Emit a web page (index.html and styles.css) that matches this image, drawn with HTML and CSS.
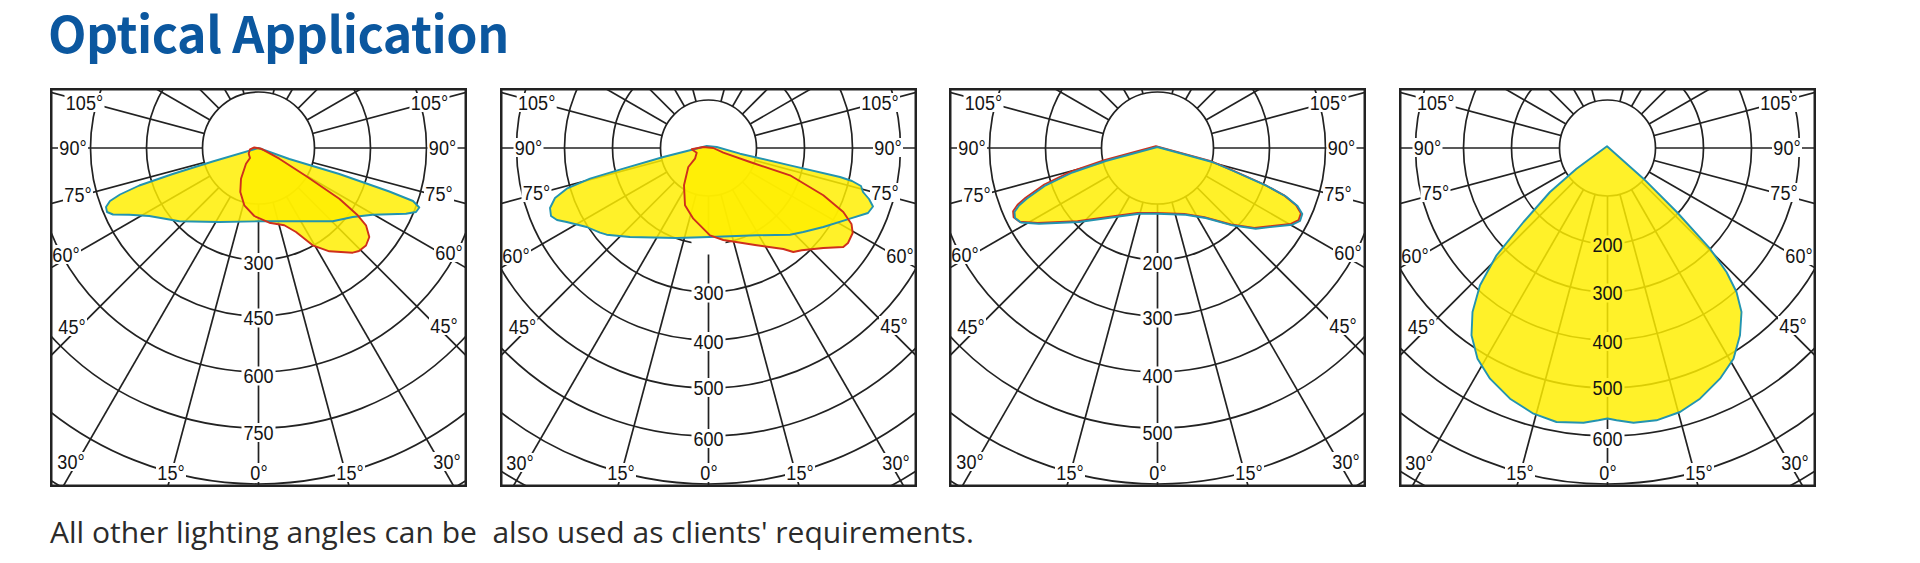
FILE: index.html
```html
<!DOCTYPE html>
<html lang="en">
<head>
<meta charset="utf-8">
<title>Optical Application</title>
<link rel="stylesheet" href="styles.css">
</head>
<body>
<main class="page">
  <h1 class="title">Optical Application</h1>

  <div class="charts">
    <!-- Chart 1 -->
    <figure class="chart">
      <svg class="polar" viewBox="0 0 417 399" width="417" height="399">
        <defs>
          <g id="gridA" class="grid">
            <line class="spoke" x1="208.5" y1="60" x2="208.5" y2="900"/>
            <line class="spoke" x1="208.5" y1="60" x2="208.5" y2="900" transform="rotate(15 208.5 60)"/>
            <line class="spoke" x1="208.5" y1="60" x2="208.5" y2="900" transform="rotate(30 208.5 60)"/>
            <line class="spoke" x1="208.5" y1="60" x2="208.5" y2="900" transform="rotate(45 208.5 60)"/>
            <line class="spoke" x1="208.5" y1="60" x2="208.5" y2="900" transform="rotate(60 208.5 60)"/>
            <line class="spoke" x1="208.5" y1="60" x2="208.5" y2="900" transform="rotate(75 208.5 60)"/>
            <line class="spoke" x1="208.5" y1="60" x2="208.5" y2="900" transform="rotate(90 208.5 60)"/>
            <line class="spoke" x1="208.5" y1="60" x2="208.5" y2="900" transform="rotate(105 208.5 60)"/>
            <line class="spoke" x1="208.5" y1="60" x2="208.5" y2="900" transform="rotate(120 208.5 60)"/>
            <line class="spoke" x1="208.5" y1="60" x2="208.5" y2="900" transform="rotate(135 208.5 60)"/>
            <line class="spoke" x1="208.5" y1="60" x2="208.5" y2="900" transform="rotate(150 208.5 60)"/>
            <line class="spoke" x1="208.5" y1="60" x2="208.5" y2="900" transform="rotate(165 208.5 60)"/>
            <line class="spoke" x1="208.5" y1="60" x2="208.5" y2="900" transform="rotate(-15 208.5 60)"/>
            <line class="spoke" x1="208.5" y1="60" x2="208.5" y2="900" transform="rotate(-30 208.5 60)"/>
            <line class="spoke" x1="208.5" y1="60" x2="208.5" y2="900" transform="rotate(-45 208.5 60)"/>
            <line class="spoke" x1="208.5" y1="60" x2="208.5" y2="900" transform="rotate(-60 208.5 60)"/>
            <line class="spoke" x1="208.5" y1="60" x2="208.5" y2="900" transform="rotate(-75 208.5 60)"/>
            <line class="spoke" x1="208.5" y1="60" x2="208.5" y2="900" transform="rotate(-90 208.5 60)"/>
            <line class="spoke" x1="208.5" y1="60" x2="208.5" y2="900" transform="rotate(-105 208.5 60)"/>
            <line class="spoke" x1="208.5" y1="60" x2="208.5" y2="900" transform="rotate(-120 208.5 60)"/>
            <line class="spoke" x1="208.5" y1="60" x2="208.5" y2="900" transform="rotate(-135 208.5 60)"/>
            <line class="spoke" x1="208.5" y1="60" x2="208.5" y2="900" transform="rotate(-150 208.5 60)"/>
            <line class="spoke" x1="208.5" y1="60" x2="208.5" y2="900" transform="rotate(-165 208.5 60)"/>
            <circle class="ring" cx="208.5" cy="60" r="112"/>
            <circle class="ring" cx="208.5" cy="60" r="168"/>
            <circle class="ring" cx="208.5" cy="60" r="224"/>
            <circle class="ring" cx="208.5" cy="60" r="280"/>
            <circle class="ring" cx="208.5" cy="60" r="336"/>
            <circle class="ring" cx="208.5" cy="60" r="392"/>
            <circle class="hub" cx="208.5" cy="60" r="56"/>
          </g>
          <g id="gridB" class="grid">
            <line class="spoke" x1="208.5" y1="60" x2="208.5" y2="900"/>
            <line class="spoke" x1="208.5" y1="60" x2="208.5" y2="900" transform="rotate(15 208.5 60)"/>
            <line class="spoke" x1="208.5" y1="60" x2="208.5" y2="900" transform="rotate(30 208.5 60)"/>
            <line class="spoke" x1="208.5" y1="60" x2="208.5" y2="900" transform="rotate(45 208.5 60)"/>
            <line class="spoke" x1="208.5" y1="60" x2="208.5" y2="900" transform="rotate(60 208.5 60)"/>
            <line class="spoke" x1="208.5" y1="60" x2="208.5" y2="900" transform="rotate(75 208.5 60)"/>
            <line class="spoke" x1="208.5" y1="60" x2="208.5" y2="900" transform="rotate(90 208.5 60)"/>
            <line class="spoke" x1="208.5" y1="60" x2="208.5" y2="900" transform="rotate(105 208.5 60)"/>
            <line class="spoke" x1="208.5" y1="60" x2="208.5" y2="900" transform="rotate(120 208.5 60)"/>
            <line class="spoke" x1="208.5" y1="60" x2="208.5" y2="900" transform="rotate(135 208.5 60)"/>
            <line class="spoke" x1="208.5" y1="60" x2="208.5" y2="900" transform="rotate(150 208.5 60)"/>
            <line class="spoke" x1="208.5" y1="60" x2="208.5" y2="900" transform="rotate(165 208.5 60)"/>
            <line class="spoke" x1="208.5" y1="60" x2="208.5" y2="900" transform="rotate(-15 208.5 60)"/>
            <line class="spoke" x1="208.5" y1="60" x2="208.5" y2="900" transform="rotate(-30 208.5 60)"/>
            <line class="spoke" x1="208.5" y1="60" x2="208.5" y2="900" transform="rotate(-45 208.5 60)"/>
            <line class="spoke" x1="208.5" y1="60" x2="208.5" y2="900" transform="rotate(-60 208.5 60)"/>
            <line class="spoke" x1="208.5" y1="60" x2="208.5" y2="900" transform="rotate(-75 208.5 60)"/>
            <line class="spoke" x1="208.5" y1="60" x2="208.5" y2="900" transform="rotate(-90 208.5 60)"/>
            <line class="spoke" x1="208.5" y1="60" x2="208.5" y2="900" transform="rotate(-105 208.5 60)"/>
            <line class="spoke" x1="208.5" y1="60" x2="208.5" y2="900" transform="rotate(-120 208.5 60)"/>
            <line class="spoke" x1="208.5" y1="60" x2="208.5" y2="900" transform="rotate(-135 208.5 60)"/>
            <line class="spoke" x1="208.5" y1="60" x2="208.5" y2="900" transform="rotate(-150 208.5 60)"/>
            <line class="spoke" x1="208.5" y1="60" x2="208.5" y2="900" transform="rotate(-165 208.5 60)"/>
            <circle class="ring" cx="208.5" cy="60" r="96"/>
            <circle class="ring" cx="208.5" cy="60" r="144"/>
            <circle class="ring" cx="208.5" cy="60" r="192"/>
            <circle class="ring" cx="208.5" cy="60" r="240"/>
            <circle class="ring" cx="208.5" cy="60" r="288"/>
            <circle class="ring" cx="208.5" cy="60" r="336"/>
            <circle class="ring" cx="208.5" cy="60" r="384"/>
            <circle class="hub" cx="208.5" cy="60" r="48"/>
          </g>
          <g id="boxDegA" class="gap">
            <rect x="14.5" y="5" width="40" height="19"/>
            <rect x="359.5" y="5" width="40" height="19"/>
            <rect x="8" y="50" width="30" height="19"/>
            <rect x="377.5" y="50" width="30" height="19"/>
            <rect x="13" y="97" width="30" height="19"/>
            <rect x="374" y="96" width="30" height="19"/>
            <rect x="1" y="157" width="30" height="19"/>
            <rect x="384" y="155" width="30" height="19"/>
            <rect x="7" y="229" width="30" height="19"/>
            <rect x="379" y="228" width="30" height="19"/>
            <rect x="6" y="364" width="30" height="19"/>
            <rect x="382" y="364" width="30" height="19"/>
            <rect x="106" y="375" width="30" height="19"/>
            <rect x="199" y="375" width="20" height="19"/>
            <rect x="285" y="375" width="30" height="19"/>
          </g>
          <g id="boxDegB" class="gap">
            <rect x="16.7" y="5" width="40" height="19"/>
            <rect x="360" y="5" width="40" height="19"/>
            <rect x="13.5" y="50" width="30" height="19"/>
            <rect x="373" y="50" width="30" height="19"/>
            <rect x="21.5" y="95" width="30" height="19"/>
            <rect x="370" y="95" width="30" height="19"/>
            <rect x="1" y="158" width="30" height="19"/>
            <rect x="385" y="158" width="30" height="19"/>
            <rect x="7.5" y="229" width="30" height="19"/>
            <rect x="379" y="228" width="30" height="19"/>
            <rect x="5" y="365" width="30" height="19"/>
            <rect x="381" y="365" width="30" height="19"/>
            <rect x="106" y="375" width="30" height="19"/>
            <rect x="199" y="375" width="20" height="19"/>
            <rect x="285" y="375" width="30" height="19"/>
          </g>
          <g id="boxValA" class="gap">
            <rect x="191.5" y="165" width="34" height="19"/>
            <rect x="191.5" y="220.5" width="34" height="19"/>
            <rect x="191.5" y="278.5" width="34" height="19"/>
            <rect x="191.5" y="335" width="34" height="19"/>
          </g>
          <g id="boxValB" class="gap">
            <rect x="191.5" y="147.5" width="34" height="19"/>
            <rect x="191.5" y="195.5" width="34" height="19"/>
            <rect x="191.5" y="244" width="34" height="19"/>
            <rect x="191.5" y="290" width="34" height="19"/>
            <rect x="191.5" y="341" width="34" height="19"/>
          </g>
          <path id="c1t" d="M208.5,60 L162.7,73.5 L122.7,86 L89.3,97.5 L70,106.5 L60,113 L56,119 L57,124 L63,126.5 L79.3,126.7 L99.3,128 L129.3,133.3 L169.3,134 L208.7,133.3 L282.7,133.3 L302.7,129 L322.7,126.7 L356,125.7 L366,124 L369.3,119.5 L363,113 L339.3,103.5 L289.3,86 L239.3,71 Z"/>
          <path id="c1r" d="M211,60.7 L229.3,70.7 L256,88 L289.3,110.7 L307.7,127.3 L316,137.3 L319.3,149 L316,157.5 L309,163 L302.7,164.7 L279.3,163.3 L262.7,157.3 L246,144 L234.3,137.3 L219.3,134.7 L204.3,128 L194.3,117.3 L190.3,104 L191,90.7 L196,75.7 L200,70 L198.7,65.7 L200,61.3 L204.3,59.5 Z"/>
        </defs>
        <use href="#gridA"/>
        <use href="#boxDegA"/>
        <use href="#boxValA"/>
        <use href="#c1t" class="shape-fill"/>
        <use href="#c1r" class="shape-fill"/>
        <use href="#c1t" class="edge-teal"/>
        <use href="#c1r" class="edge-red"/>
        <g class="lbl">
          <text transform="translate(34.5 21.5) scale(.86 1)">105°</text>
          <text transform="translate(379.5 21.5) scale(.86 1)">105°</text>
          <text transform="translate(23 66.5) scale(.86 1)">90°</text>
          <text transform="translate(392.5 66.5) scale(.86 1)">90°</text>
          <text transform="translate(28 113.5) scale(.86 1)">75°</text>
          <text transform="translate(389 112.5) scale(.86 1)">75°</text>
          <text transform="translate(16 173.5) scale(.86 1)">60°</text>
          <text transform="translate(399 171.5) scale(.86 1)">60°</text>
          <text transform="translate(22 245.5) scale(.86 1)">45°</text>
          <text transform="translate(394 244.5) scale(.86 1)">45°</text>
          <text transform="translate(21 380.5) scale(.86 1)">30°</text>
          <text transform="translate(397 380.5) scale(.86 1)">30°</text>
          <text transform="translate(121 391.5) scale(.86 1)">15°</text>
          <text transform="translate(209 391.5) scale(.86 1)">0°</text>
          <text transform="translate(300 391.5) scale(.86 1)">15°</text>
          <text transform="translate(208.5 181.5) scale(.86 1)">300</text>
          <text transform="translate(208.5 237) scale(.86 1)">450</text>
          <text transform="translate(208.5 295) scale(.86 1)">600</text>
          <text transform="translate(208.5 351.5) scale(.86 1)">750</text>
        </g>
        <rect class="frame" x="1.2" y="1.2" width="414.6" height="396.6"/>
      </svg>
    </figure>

    <!-- Chart 2 -->
    <figure class="chart">
      <svg class="polar" viewBox="0 0 417 399" width="417" height="399">
        <defs>
          <path id="c2t" d="M206.7,58 L163.3,69 L123.3,80.7 L90,90.7 L66.7,100.7 L55,110 L50,120 L51,128 L57,132 L66.7,134 L86.7,139 L100,144.7 L106.7,146.7 L130,149 L176.7,150 L209.3,149 L256.7,147.3 L290,146.7 L303.3,144 L323.3,139 L350,130.7 L368,125 L373,118.5 L369,111 L363,104 L361,98 L352,93 L340,89 L290,77.3 L240,65.7 L216.7,59 Z"/>
          <path id="c2r" d="M213.3,60 L223.3,64.7 L250,74 L290,87.3 L323.3,107.3 L343.3,124 L351.5,136 L352.7,145 L348,155 L343.3,159 L323.3,160 L301.7,162.3 L293.3,164 L283.3,161 L256.7,157.3 L223.3,152 L210,147.3 L193.3,130.7 L185,117.3 L184,97.3 L188.3,79 L195,70.7 L196.7,64.7 L191.7,61.3 L203.3,59 Z"/>
        </defs>
        <use href="#gridB"/>
        <use href="#boxDegB"/>
        <use href="#boxValB"/>
        <use href="#c2t" class="shape-fill"/>
        <use href="#c2r" class="shape-fill"/>
        <use href="#c2t" class="edge-teal"/>
        <use href="#c2r" class="edge-red"/>
        <g class="lbl">
          <text transform="translate(36.7 21.5) scale(.86 1)">105°</text>
          <text transform="translate(380 21.5) scale(.86 1)">105°</text>
          <text transform="translate(28.5 66.5) scale(.86 1)">90°</text>
          <text transform="translate(388 66.5) scale(.86 1)">90°</text>
          <text transform="translate(36.5 111.5) scale(.86 1)">75°</text>
          <text transform="translate(385 111.5) scale(.86 1)">75°</text>
          <text transform="translate(16 174.5) scale(.86 1)">60°</text>
          <text transform="translate(400 174.5) scale(.86 1)">60°</text>
          <text transform="translate(22.5 245.5) scale(.86 1)">45°</text>
          <text transform="translate(394 244.5) scale(.86 1)">45°</text>
          <text transform="translate(20 381.5) scale(.86 1)">30°</text>
          <text transform="translate(396 381.5) scale(.86 1)">30°</text>
          <text transform="translate(121 391.5) scale(.86 1)">15°</text>
          <text transform="translate(209 391.5) scale(.86 1)">0°</text>
          <text transform="translate(300 391.5) scale(.86 1)">15°</text>
          <text transform="translate(208.5 212) scale(.86 1)">300</text>
          <text transform="translate(208.5 260.5) scale(.86 1)">400</text>
          <text transform="translate(208.5 306.5) scale(.86 1)">500</text>
          <text transform="translate(208.5 357.5) scale(.86 1)">600</text>
        </g>
        <rect class="frame" x="1.2" y="1.2" width="414.6" height="396.6"/>
      </svg>
    </figure>

    <!-- Chart 3 -->
    <figure class="chart">
      <svg class="polar" viewBox="0 0 417 399" width="417" height="399">
        <defs>
          <path id="c3t" d="M208.3,59 L263.3,74 L283.3,82.5 L316.7,97.3 L337,108.5 L348.5,118 L353.3,126 L351,133 L343.3,136.7 L306.7,140.7 L283.3,137.3 L256.7,130 L236.7,126.7 L208.3,125.7 L190,125.7 L173.3,128 L130,134 L90,135.7 L72,134.5 L66,130 L65.5,124 L70,117.5 L78,110.5 L96.7,97.3 L123.3,84.5 L156.7,73 Z"/>
        </defs>
        <use href="#gridA"/>
        <use href="#boxDegA"/>
        <use href="#boxValA"/>
        <use href="#c3t" class="shape-fill"/>
        <use href="#c3t" class="edge-red" transform="translate(-1.4 -0.8)"/>
        <use href="#c3t" class="edge-teal"/>
        <g class="lbl">
          <text transform="translate(34.5 21.5) scale(.86 1)">105°</text>
          <text transform="translate(379.5 21.5) scale(.86 1)">105°</text>
          <text transform="translate(23 66.5) scale(.86 1)">90°</text>
          <text transform="translate(392.5 66.5) scale(.86 1)">90°</text>
          <text transform="translate(28 113.5) scale(.86 1)">75°</text>
          <text transform="translate(389 112.5) scale(.86 1)">75°</text>
          <text transform="translate(16 173.5) scale(.86 1)">60°</text>
          <text transform="translate(399 171.5) scale(.86 1)">60°</text>
          <text transform="translate(22 245.5) scale(.86 1)">45°</text>
          <text transform="translate(394 244.5) scale(.86 1)">45°</text>
          <text transform="translate(21 380.5) scale(.86 1)">30°</text>
          <text transform="translate(397 380.5) scale(.86 1)">30°</text>
          <text transform="translate(121 391.5) scale(.86 1)">15°</text>
          <text transform="translate(209 391.5) scale(.86 1)">0°</text>
          <text transform="translate(300 391.5) scale(.86 1)">15°</text>
          <text transform="translate(208.5 181.5) scale(.86 1)">200</text>
          <text transform="translate(208.5 237) scale(.86 1)">300</text>
          <text transform="translate(208.5 295) scale(.86 1)">400</text>
          <text transform="translate(208.5 351.5) scale(.86 1)">500</text>
        </g>
        <rect class="frame" x="1.2" y="1.2" width="414.6" height="396.6"/>
      </svg>
    </figure>

    <!-- Chart 4 -->
    <figure class="chart">
      <svg class="polar" viewBox="0 0 417 399" width="417" height="399">
        <defs>
          <path id="c4t" d="M208,58.3 L244.5,90.7 L277.8,124 L311,160.7 L327.5,184 L337.5,204 L342.5,224 L341,247.3 L334.5,270.7 L321,290.7 L301,310.7 L281,324 L257.5,332.3 L234.5,334.7 L217.5,332.3 L208.5,330.5 L199.5,332.3 L184.5,334.7 L157.5,334 L134.5,325.7 L111,310.7 L91,290.7 L78.5,270.7 L72.5,247.3 L73.5,224 L81,197.3 L97.5,167.3 L124.5,134 L151,104 L177.5,80.7 Z"/>
        </defs>
        <use href="#gridB"/>
        <use href="#boxDegB"/>
        <use href="#boxValB"/>
        <use href="#c4t" class="shape-fill"/>
        <use href="#c4t" class="edge-teal"/>
        <g class="lbl">
          <text transform="translate(36.7 21.5) scale(.86 1)">105°</text>
          <text transform="translate(380 21.5) scale(.86 1)">105°</text>
          <text transform="translate(28.5 66.5) scale(.86 1)">90°</text>
          <text transform="translate(388 66.5) scale(.86 1)">90°</text>
          <text transform="translate(36.5 111.5) scale(.86 1)">75°</text>
          <text transform="translate(385 111.5) scale(.86 1)">75°</text>
          <text transform="translate(16 174.5) scale(.86 1)">60°</text>
          <text transform="translate(400 174.5) scale(.86 1)">60°</text>
          <text transform="translate(22.5 245.5) scale(.86 1)">45°</text>
          <text transform="translate(394 244.5) scale(.86 1)">45°</text>
          <text transform="translate(20 381.5) scale(.86 1)">30°</text>
          <text transform="translate(396 381.5) scale(.86 1)">30°</text>
          <text transform="translate(121 391.5) scale(.86 1)">15°</text>
          <text transform="translate(209 391.5) scale(.86 1)">0°</text>
          <text transform="translate(300 391.5) scale(.86 1)">15°</text>
          <text transform="translate(208.5 164) scale(.86 1)">200</text>
          <text transform="translate(208.5 212) scale(.86 1)">300</text>
          <text transform="translate(208.5 260.5) scale(.86 1)">400</text>
          <text transform="translate(208.5 306.5) scale(.86 1)">500</text>
          <text transform="translate(208.5 357.5) scale(.86 1)">600</text>
        </g>
        <rect class="frame" x="1.2" y="1.2" width="414.6" height="396.6"/>
      </svg>
    </figure>
  </div>

  <p class="note">All other lighting angles can be&nbsp; also used as clients' requirements.</p>
</main>
</body>
</html>
```

FILE: styles.css
```css
* {
  box-sizing: border-box;
}

html,
body {
  margin: 0;
  padding: 0;
  background: #ffffff;
}

.page {
  padding: 0 0 0 48px;
  width: 1920px;
  height: 563px;
}

.title {
  margin: 0;
  font-family: "Noto Sans CJK SC", "Noto Sans", sans-serif;
  font-weight: 700;
  font-size: 50px;
  line-height: 62.4px;
  color: #0b579f;
  letter-spacing: -0.45px;
  white-space: nowrap;
}

.charts {
  display: flex;
  gap: 32.6px;
  margin: 25.9px 0 0 2px;
}

.chart {
  margin: 0;
  width: 417px;
  height: 399px;
  flex: none;
}

.polar {
  display: block;
  width: 417px;
  height: 399px;
  overflow: hidden;
}

.grid {
  stroke: #222222;
  stroke-width: 1.7;
  fill: none;
}

.spoke {
  stroke: #222222;
}

.ring {
  fill: none;
}

.hub {
  fill: #ffffff;
  stroke: #222222;
}

.gap {
  fill: #ffffff;
  stroke: none;
}

.lbl {
  font-family: "Liberation Sans", Arial, sans-serif;
  font-size: 21px;
  text-anchor: middle;
  fill: #141414;
  stroke: none;
}

.shape-fill {
  fill: #ffee00;
  fill-opacity: 0.84;
  stroke: none;
}

.edge-teal {
  fill: none;
  stroke: #2394b0;
  stroke-width: 1.9;
  stroke-linejoin: round;
}

.edge-red {
  fill: none;
  stroke: #cf2f1c;
  stroke-width: 1.9;
  stroke-linejoin: round;
}

.frame {
  fill: none;
  stroke: #222222;
  stroke-width: 2.6;
}

.note {
  margin: 27px 0 0 2px;
  font-family: "Open Sans", "Noto Sans", sans-serif;
  font-size: 30px;
  line-height: 36px;
  color: #2b2b2b;
  white-space: nowrap;
}
```
